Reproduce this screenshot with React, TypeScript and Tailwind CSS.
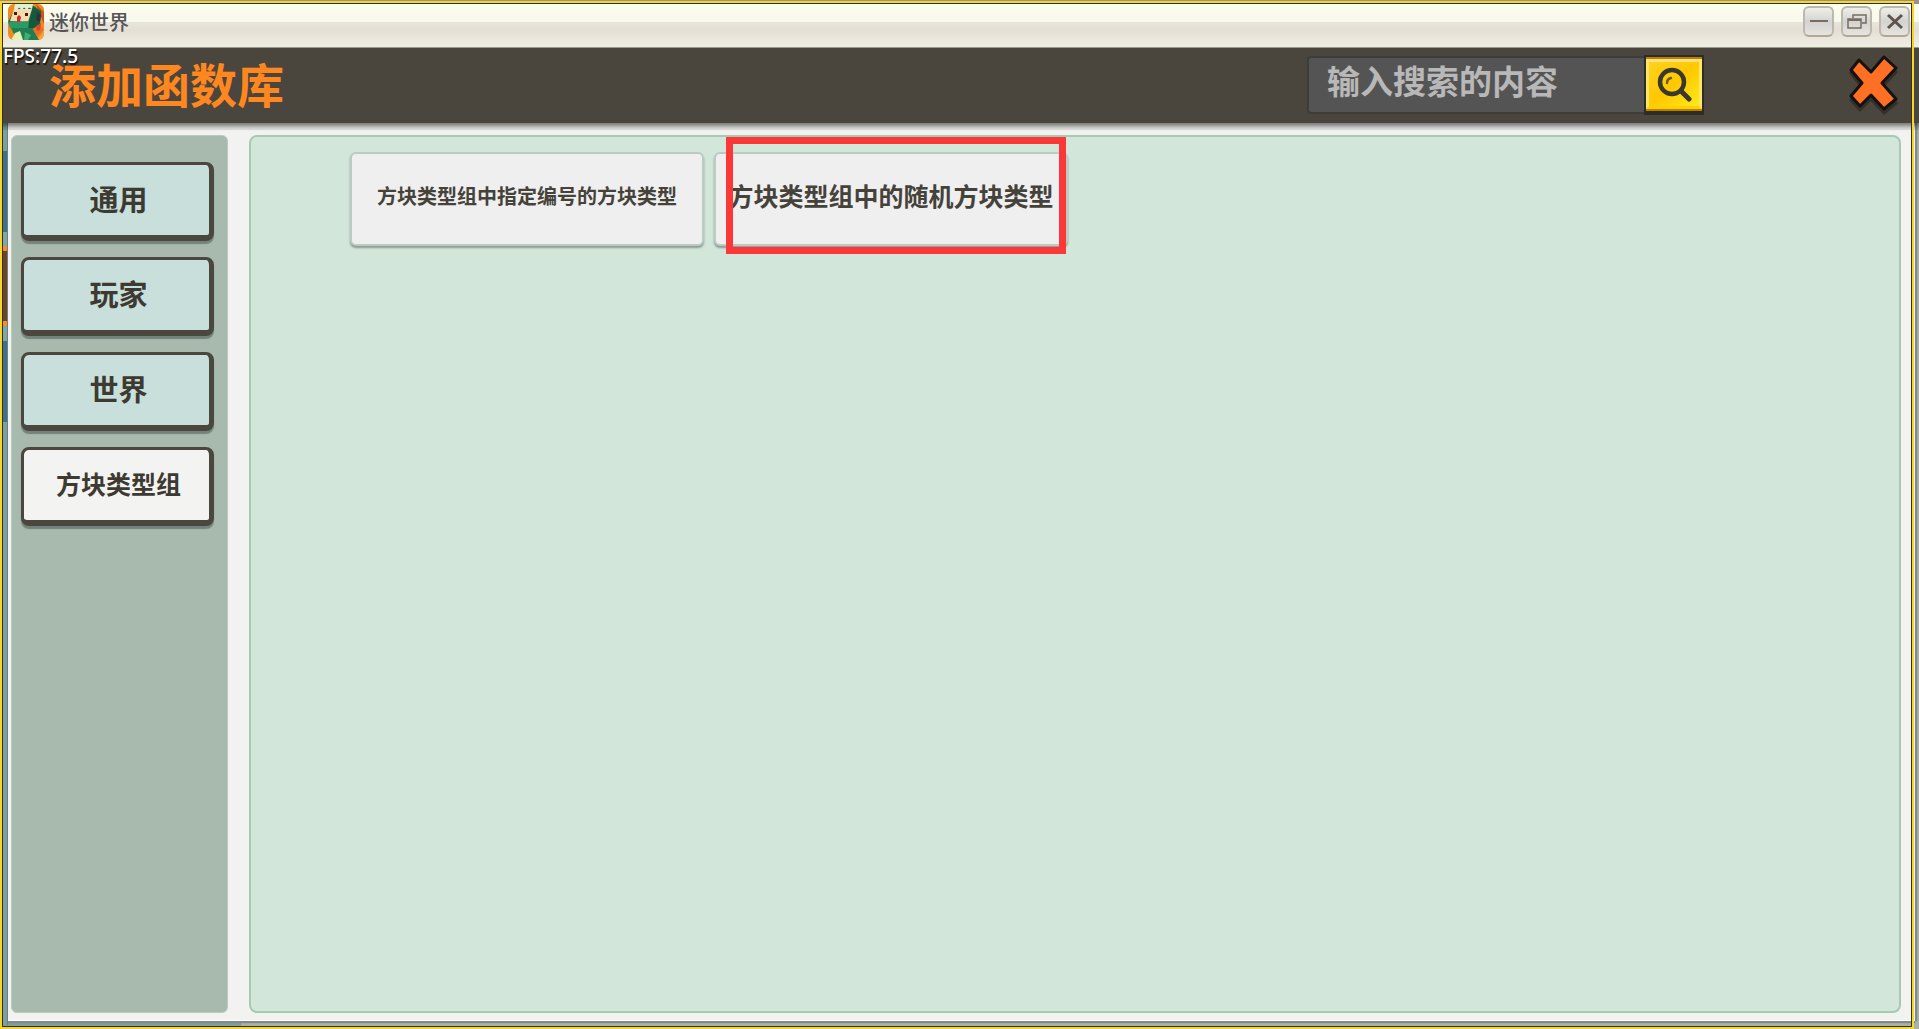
import React, { useState } from 'react';

const categories = [
  { name: '通用', size: 'text-[29px]' },
  { name: '玩家', size: 'text-[29px]' },
  { name: '世界', size: 'text-[29px]' },
  { name: '方块类型组', size: 'text-[25px]' },
];

// Strip of the game scene that shows at the left of the dialog
const sceneStrip = [
  'h-[28px] bg-[#7d9f9f]',
  'h-[81px] bg-[#3f7187]',
  'h-[14px] bg-[#82a5a5]',
  'h-[5px] bg-[#f58c2a]',
  'h-[70px] bg-[#6f4325]',
  'h-[5px] bg-[#f58c2a]',
  'h-[15px] bg-[#82a5a5]',
  'h-[81px] bg-[#3f7187]',
  'flex-1 bg-[#7d9f9f]',
];

const AppIcon = () => (
  <svg viewBox="0 0 36 36" className="w-9 h-9 rounded-md">
    <rect width="36" height="36" fill="#ef8a1c" />
    <path d="M28 0 L36 8 V20 L30 6Z" fill="#c9531a" />
    <path d="M26 36 Q36 32 36 22 V36Z" fill="#f7a53a" />
    <path d="M24 24 L32 21 L36 26 L28 33Z" fill="#e8702a" />
    {/* head */}
    <path d="M8 2 L26 2 L33 7 L32 21 L20 27 L3 24 L0 18Z" fill="#1c6e47" />
    <path d="M25 3 L33 8 L31 21 L19 27 L21 18Z" fill="#155a3c" />
    <path d="M6 5 L24 5 L20 18 L2 17Z" fill="#fbd9b0" />
    <path d="M7 0 H25 L24 5 L21 3.500 L19 6 L16 3.500 L14 6 L11 3.500 L9 6 L6 4.500Z" fill="#dff0d8" />
    <path d="M0 18 L21 17 L20 27 L2 24Z" fill="#2c9a63" />
    {/* body */}
    <path d="M3 24 L24 24 L31 36 H9Z" fill="#1f7f52" />
    <path d="M7 29 L12 27 L15 36 H3Z" fill="#e9efb5" />
    <path d="M17 28 L23 31 L20 36 H16Z" fill="#3fae70" />
    <rect x="6" y="8" width="3" height="3" fill="#33241b" />
    <rect x="17" y="9" width="3" height="3" fill="#33241b" />
    <path d="M9 13 L11 11 L13 13 L12 18 H9Z" fill="#c92f22" />
    <path d="M29 8 L33 11 L32 18 L28 16Z" fill="#28334a" />
    <path d="M28 22 L33 19 L32 26 L29 27Z" fill="#d8452a" />
  </svg>
);

const windowButton =
  'w-[31px] h-[31px] flex items-center justify-center rounded-md border-2 border-[#bdb7ad] border-b-[#b3a597] bg-linear-to-b from-[#efefe8] via-[#d3d3d3] to-[#e6e4dc]';

const TitleBar = () => (
  <div className="h-[44px] flex items-start pl-2 pr-[9px] border-b border-[#9aa08a] bg-linear-to-b from-[#fbfdee] from-0% via-[#f8f8ec] via-42% to-[#efeee2] to-100%">
    <div className="absolute inset-x-0 top-[22px] h-[24px] bg-linear-to-b from-[#e9e5da] via-[#e4dfd4] via-35% to-[#efeee2]" />
    <div className="relative flex items-center flex-1">
      <AppIcon />
      <h1 className="ml-[5px] text-[20px] leading-6 font-medium text-[#555]">迷你世界</h1>
    </div>
    <div className="relative flex gap-[7px] pt-[2px]">
      <button aria-label="Minimize" className={windowButton}>
        <svg viewBox="0 0 20 20" className="w-5 h-5">
          <path d="M1 9 H19" stroke="#7a6c60" strokeWidth="2" />
        </svg>
      </button>
      <button aria-label="Restore" className={windowButton}>
        <svg viewBox="0 0 20 20" className="w-5 h-5" fill="none" stroke="#7a6c60" strokeWidth="1.500">
          <path d="M6 6 V3 H19 V11 H15" />
          <path d="M1 7 H14 V16 H1Z" />
          <path d="M1 8 H14" strokeWidth="2" />
        </svg>
      </button>
      <button aria-label="Close window" className={windowButton}>
        <svg viewBox="0 0 20 20" className="w-5 h-5" stroke="#5f544b" strokeWidth="3">
          <path d="M3 3 L17 16 M17 3 L3 16" />
        </svg>
      </button>
    </div>
  </div>
);

const Header = () => {
  const [query, setQuery] = useState('');

  return (
    <header className="relative z-10 h-[75px] flex items-center pl-[49px] pr-[21px] pb-[2px] bg-[#4a463e] shadow-[0_3px_4px_rgba(0,0,0,0.45),0_7px_1px_rgba(0,0,0,0.09)]">
      <span className="absolute left-[3px] top-0 text-[19px] leading-4 font-['Noto_Sans',sans-serif] font-medium text-white [text-shadow:1px_2px_1px_#111]">
        FPS:77.5
      </span>
      <h2 className="flex-1 text-[47px] leading-none pb-1 font-bold text-[#ff871f]">添加函数库</h2>
      <form className="flex items-center mr-[144px]" onSubmit={(e) => e.preventDefault()}>
        <input
          type="text"
          aria-label="搜索"
          placeholder="输入搜索的内容"
          value={query}
          onChange={(e) => setQuery(e.target.value)}
          className="w-[337px] h-[58px] pl-[18px] pb-[10px] rounded-l-sm border-2 border-r-0 border-[#3e3d3a] bg-[#545454] text-[33px] font-bold text-white placeholder:text-[#b8b8b8] outline-none"
        />
        <button aria-label="搜索" className="w-[60px] h-[60px] border-2 border-b-4 border-[#2e2c28] bg-[#bd7f00]">
          <span className="h-[50px] flex items-center justify-center border-3 border-t-[#ffe27a] border-l-[#ffe766] border-r-[#ffe766] border-b-[#ffd000] bg-linear-to-br from-[#ffd21c] via-[#ffc800] to-[#ffe81a]">
            <svg viewBox="0 0 36 36" className="w-9 h-9" fill="none" stroke="#3a382c" strokeLinecap="round">
              <circle cx="16" cy="16" r="12" strokeWidth="4.500" />
              <path d="M26 26 L33 33" strokeWidth="5" />
              <path d="M11 17 Q11 13 15 12" strokeWidth="2.500" stroke="#6b5c14" />
            </svg>
          </span>
        </button>
      </form>
      <button aria-label="关闭">
        <svg viewBox="0 0 50 60" className="w-[50px] h-[60px]" strokeLinejoin="round">
          <path d="M11 9 L23 21 L36 6 L48 17 L34 32 L48 48 L36 58 L23 44 L12 55 L3 45 L14 32 L3 18Z" fill="#2f2c27" stroke="#33302b" strokeWidth="3" />
          <path d="M11 5 L23 17 L36 2 L48 13 L34 28 L48 44 L36 54 L23 40 L12 51 L3 41 L14 28 L3 15Z" fill="#ff6f24" stroke="#15120e" strokeWidth="3" />
        </svg>
      </button>
    </header>
  );
};

const cardStyle =
  'w-[354px] h-[94px] pb-[6px] rounded-md border-2 border-[#bccbc2] bg-[#efefef] shadow-[0_2px_2px_rgba(70,80,75,0.5)] whitespace-nowrap text-[#45423a] font-bold';

const App: React.FC = () => {
  const [active, setActive] = useState('方块类型组');

  return (
    <div className="relative min-h-screen flex flex-col pt-[4px] overflow-hidden bg-[#a08d87] font-['Noto_Sans_CJK_SC',sans-serif]">
      <TitleBar />
      <Header />

      <div className="flex-1 flex pl-[3px] pb-2 bg-[linear-gradient(to_right,#7d9f9f_241px,#a9afab_241px)]">
        <div className="w-[5px] -mb-1 flex flex-col border-r border-[#657f80]">
          {sceneStrip.map((style, i) => (
            <div key={i} className={style} />
          ))}
        </div>

        <main className="flex-1 flex gap-[21px] pt-3 pb-[7px] pl-[3px] pr-[14px] mr-1 bg-[#f2f2f1] border-b border-white shadow-[0_2px_1px_#858986,2px_0_1px_#858986]">
          <nav className="w-[217px] flex flex-col gap-[13px] pt-[26px] pl-[9px] pr-[13px] rounded-md border border-[#bacabf] bg-[#a8baae]">
            {categories.map((item) => (
              <button
                key={item.name}
                onClick={() => setActive(item.name)}
                className={`h-[79px] mb-[3px] pb-[3px] pl-1 rounded-lg border-3 border-r-5 border-b-6 border-[#4b463e] shadow-[0_3px_1px_#74837a] font-bold text-[#3d3a32] ${item.size} ${active === item.name ? 'bg-[#f3f3f2]' : 'bg-[#c9dfdc]'}`}
              >
                {item.name}
              </button>
            ))}
          </nav>

          <section className="flex-1 flex items-start gap-[10px] pt-[15px] pl-[99px] rounded-lg border-2 border-[#a5cab3] bg-[#d2e6da]">
            <button className={`${cardStyle} text-[20px]`}>方块类型组中指定编号的方块类型</button>
            <div className="relative">
              <button className={`${cardStyle} text-[25px]`}>方块类型组中的随机方块类型</button>
              {/* Highlight over the second function */}
              <div className="absolute left-3 -top-[15px] w-[340px] h-[117px] border-7 border-[#fc3737] pointer-events-none" />
            </div>
          </section>
        </main>
      </div>

      {/* Window outline */}
      <div className="absolute z-20 left-0 right-[5px] top-px bottom-0 border-2 border-[#f5d62b] pointer-events-none">
        <div className="h-full border border-[#33302b]" />
      </div>
    </div>
  );
};

export default App;
